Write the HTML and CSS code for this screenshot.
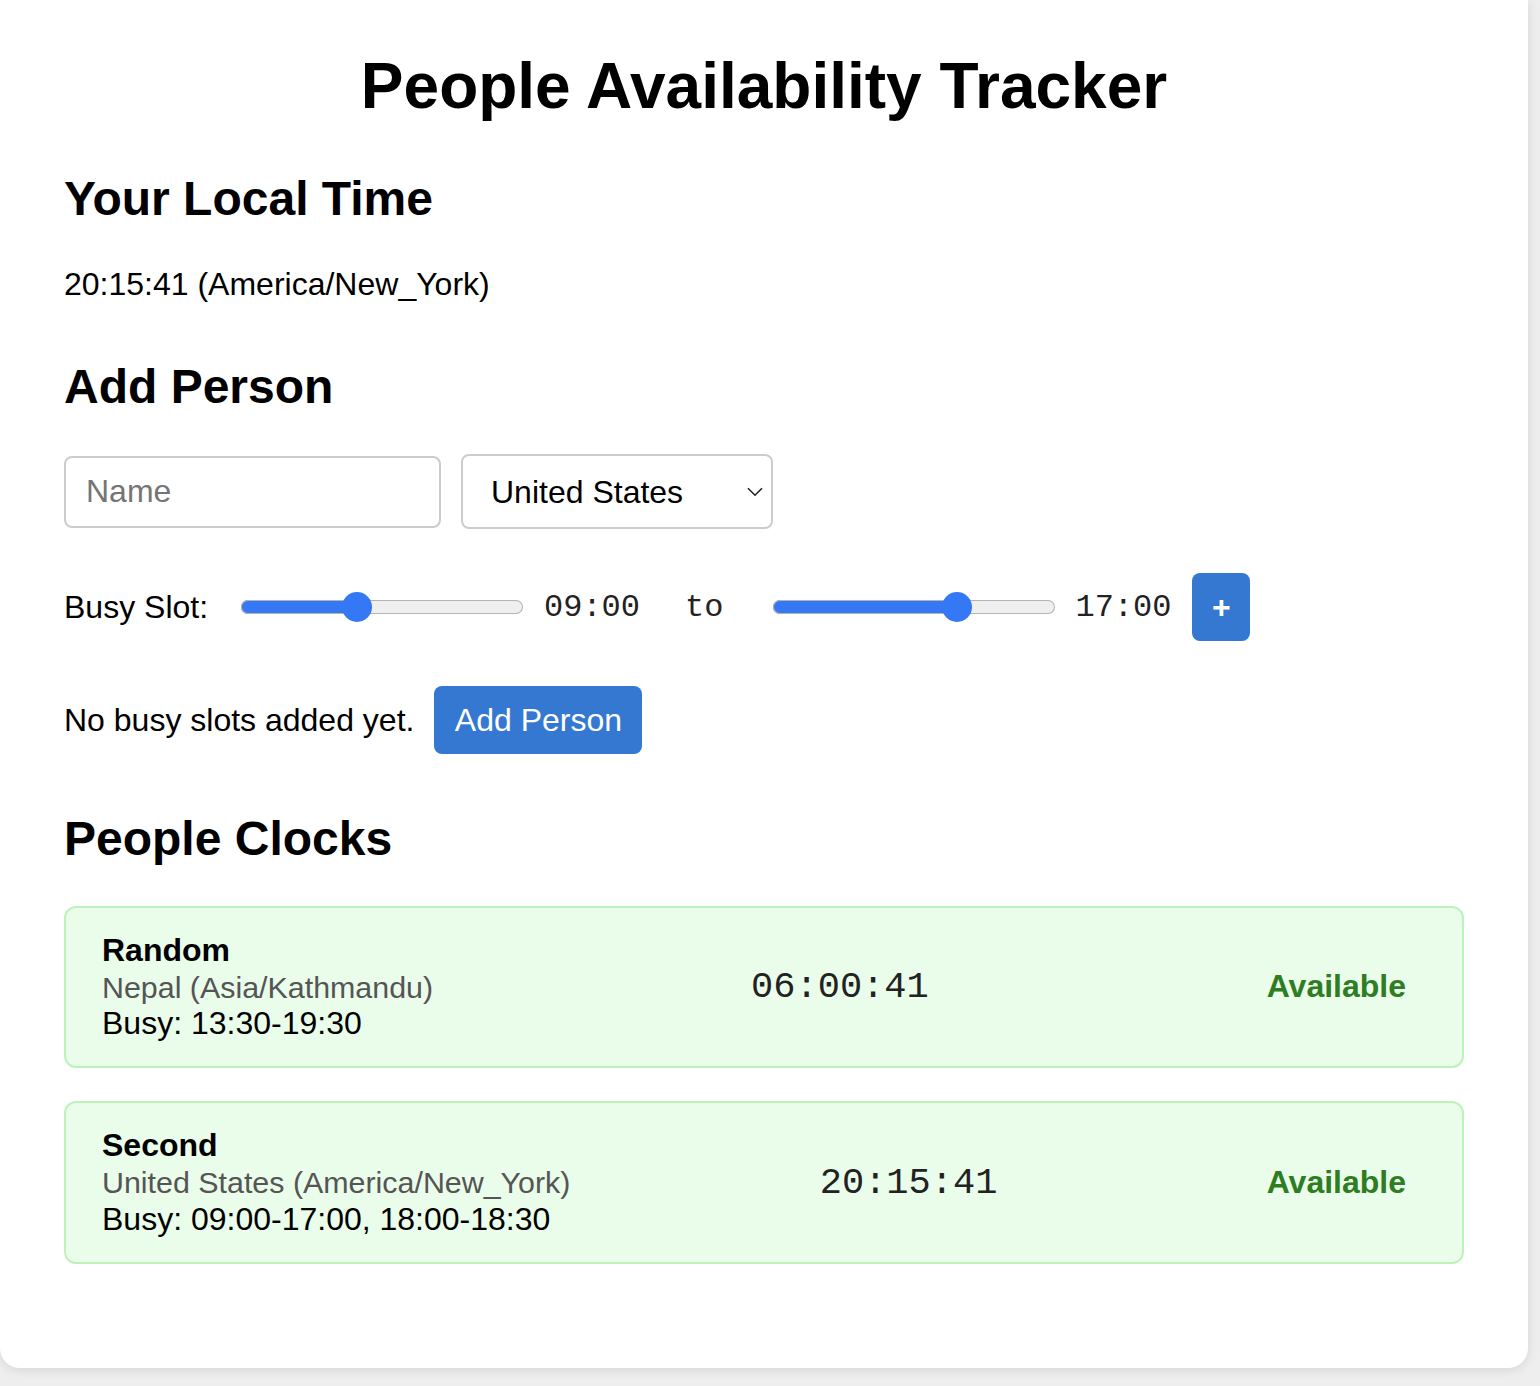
FILE: index.html
```html
<!DOCTYPE html>
<html lang="en">
<head>
<meta charset="utf-8">
<title>People Availability Tracker</title>
<link rel="stylesheet" href="styles.css">
</head>
<body>
<div class="card">
  <h1 class="title">People Availability Tracker</h1>

  <section class="section-local">
    <h2 class="heading">Your Local Time</h2>
    <p class="local-time">20:15:41 (America/New_York)</p>
  </section>

  <section class="section-add">
    <h2 class="heading">Add Person</h2>
    <div class="form-row">
      <input class="text-input" type="text" placeholder="Name">
      <select class="country-select">
        <option>United States</option>
        <option>Nepal</option>
      </select>
    </div>
    <div class="slot-row">
      <span class="slot-label">Busy Slot:</span>
      <input class="range range-start" type="range" min="0" max="100" value="40" style="--pct: 41.1%">
      <span class="slot-time slot-time-start">09:00</span>
      <span class="slot-to">to</span>
      <input class="range range-end" type="range" min="0" max="100" value="67" style="--pct: 65.2%">
      <span class="slot-time slot-time-end">17:00</span>
      <button class="btn btn-plus" type="button">+</button>
    </div>
    <div class="empty-row">
      <span class="empty-text">No busy slots added yet.</span>
      <button class="btn btn-add" type="button">Add Person</button>
    </div>
  </section>

  <section class="section-clocks">
    <h2 class="heading">People Clocks</h2>
    <div class="clock">
      <div class="clock-info">
        <div class="clock-name">Random</div>
        <div class="clock-tz">Nepal (Asia/Kathmandu)</div>
        <div class="clock-busy">Busy: 13:30-19:30</div>
      </div>
      <div class="clock-time">06:00:41</div>
      <div class="clock-status">Available</div>
    </div>
    <div class="clock">
      <div class="clock-info">
        <div class="clock-name">Second</div>
        <div class="clock-tz">United States (America/New_York)</div>
        <div class="clock-busy">Busy: 09:00-17:00, 18:00-18:30</div>
      </div>
      <div class="clock-time">20:15:41</div>
      <div class="clock-status">Available</div>
    </div>
  </section>
</div>
</body>
</html>
```

FILE: styles.css
```css
* { box-sizing: border-box; }

html, body {
  margin: 0;
  padding: 0;
}

body {
  background: #eeeeee;
  font-family: "Liberation Sans", Arial, Helvetica, sans-serif;
  font-size: 32px;
  color: #000;
  min-height: 1386px;
}

.card {
  width: 1528px;
  background: #ffffff;
  padding: 49px 64px 104px 64px;
  border-radius: 0 0 20px 20px;
  box-shadow: 0 2px 12px rgba(0, 0, 0, 0.10);
}

.title {
  margin: 0;
  font-size: 64px;
  font-weight: bold;
  text-align: center;
}

.heading {
  margin: 0;
  font-size: 48px;
  font-weight: bold;
}

.section-local { margin-top: 47.5px; }
.local-time { margin: 40px 0 0 0; }

.section-add { margin-top: 56px; }

.form-row {
  margin-top: 40.5px;
  display: flex;
  align-items: center;
  gap: 20px;
}

.text-input {
  width: 377px;
  height: 72px;
  padding: 0 20px;
  border: 2px solid #cccccc;
  border-radius: 8px;
  font-family: inherit;
  font-size: 32px;
  color: #000;
  outline: none;
}
.text-input::placeholder { color: #757575; }

.country-select {
  width: 312px;
  height: 75px;
  padding: 0 40px 0 28px;
  border: 2px solid #cccccc;
  border-radius: 8px;
  font-family: inherit;
  font-size: 32px;
  color: #000;
  background-color: #fff;
  -webkit-appearance: none;
  appearance: none;
  background-image: url("data:image/svg+xml,%3Csvg xmlns='http://www.w3.org/2000/svg' width='16' height='10' viewBox='0 0 16 10'%3E%3Cpath d='M1 1.2l7 7 7-7' fill='none' stroke='%23222' stroke-width='1.6'/%3E%3C/svg%3E");
  background-repeat: no-repeat;
  background-position: right 8px center;
  background-size: 16px 10px;
}

.slot-row {
  margin-top: 44px;
  display: flex;
  align-items: center;
  height: 68px;
}

.slot-row > * { flex-shrink: 0; }

.slot-label {
  width: 145px;
  white-space: nowrap;
}

.range {
  -webkit-appearance: none;
  appearance: none;
  width: 282px;
  height: 32px;
  margin: 0;
  padding: 0;
  background: transparent;
}
.range-start { margin-left: 32px; }
.range-end { margin-left: 50px; }

.range::-webkit-slider-runnable-track {
  height: 14px;
  border-radius: 7px;
  background: linear-gradient(to right, #3478f6 var(--pct), #efefef var(--pct));
  box-shadow: inset 0 0 0 1px #b4b4b4;
}
.range::-webkit-slider-thumb {
  -webkit-appearance: none;
  appearance: none;
  width: 30px;
  height: 30px;
  margin-top: -8px;
  border-radius: 50%;
  background: #3478f6;
  border: none;
}

.slot-time,
.slot-to {
  font-family: "Liberation Mono", "Courier New", monospace;
  font-size: 32px;
  color: #222;
}
.slot-time-start { margin-left: 21px; }
.slot-to { margin-left: 45px; }
.slot-time-end { margin-left: 20px; }

.btn {
  border: none;
  border-radius: 8px;
  background: #3478d2;
  color: #fff;
  font-family: inherit;
  font-size: 32px;
  line-height: 36px;
  padding: 16px 20px;
  height: 68px;
  cursor: pointer;
}
.btn-plus {
  margin-left: 21px;
  width: 58px;
  padding: 16px 0;
  font-weight: bold;
}

.empty-row {
  margin-top: 45px;
  display: flex;
  align-items: center;
  gap: 20px;
}
.btn-add { width: 208px; padding: 16px 0; }

.section-clocks { margin-top: 56.5px; }

.clock {
  display: flex;
  align-items: center;
  justify-content: space-between;
  background: #eafcea;
  border: 2px solid #bdf2bb;
  border-radius: 12px;
  padding: 24px 36px;
  margin-top: 33px;
}
.section-clocks .heading + .clock { margin-top: 40px; }

.clock-name { font-weight: bold; }
.clock-tz {
  color: #555555;
  font-size: 30.4px;
  line-height: 36.8px;
}

.clock-time {
  font-family: "Liberation Mono", "Courier New", monospace;
  font-size: 37px;
  color: #222;
}

.clock-status {
  font-weight: bold;
  color: #2e7d22;
  padding: 8px 20px;
}
```
